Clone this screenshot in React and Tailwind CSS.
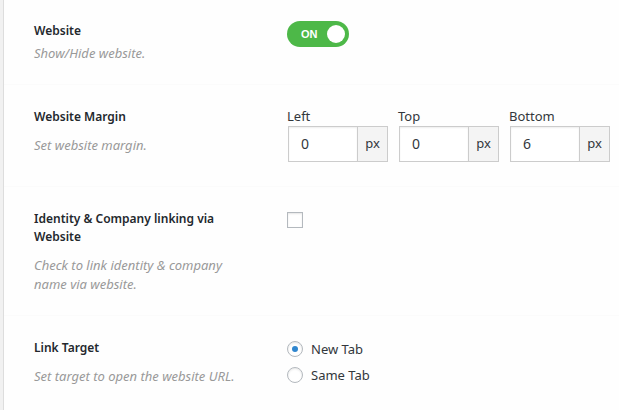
import { useState } from "react";

function Row({ title, htmlFor, hint, hintGap = "mt-2.5", className, children }) {
  const Title = htmlFor ? "label" : "h3";
  return (
    <section className={`flex border-b border-[#fbfbfb] px-[30px] last:border-b-0 ${className}`}>
      <div className="w-[253px] shrink-0 pt-px pr-10">
        <Title htmlFor={htmlFor} className="block text-xs leading-[18px] font-semibold text-[#23282d]">
          {title}
        </Title>
        <p className={`text-[13px] leading-[19px] text-[#999] italic ${hintGap}`}>{hint}</p>
      </div>
      <div className="min-w-0 grow">{children}</div>
    </section>
  );
}

function PixelField({ id, label, initial }) {
  const [value, setValue] = useState(initial);
  return (
    <div className="w-[101px] shrink-0">
      <label htmlFor={id} className="block leading-[18px]">
        {label}
      </label>
      <div className="mt-px ml-px flex h-9 border border-[#ccc]">
        <input
          id={id}
          type="text"
          value={value}
          onChange={(e) => setValue(e.target.value)}
          className="w-[69px] border-r border-[#ccc] bg-white px-3 text-sm text-[#32373c] shadow-[inset_0_1px_2px_rgba(0,0,0,0.07)] outline-none"
        />
        <span className="flex grow items-center justify-center bg-[#f4f4f4]">px</span>
      </div>
    </div>
  );
}

function RadioOption({ label, value, selected, onSelect }) {
  return (
    <label className="flex items-center gap-2">
      <input
        type="radio"
        name="link-target"
        value={value}
        checked={selected === value}
        onChange={() => onSelect(value)}
        className="grid size-4 appearance-none place-items-center rounded-full border border-[#b4b9be] bg-white shadow-[inset_0_1px_2px_rgba(0,0,0,0.1)] before:size-1.5 before:rounded-full checked:before:bg-[#2f86cf]"
      />
      {label}
    </label>
  );
}

export default function App() {
  const [visible, setVisible] = useState(true);
  const [linked, setLinked] = useState(false);
  const [target, setTarget] = useState("new");

  return (
    <div className="min-h-screen bg-[#f1f1f1] pl-[3px] font-['Noto_Sans',sans-serif] text-[13px] text-[#32373c]">
      <main className="min-h-screen border-l border-[#ddd] bg-[#fefefe]">
        <Row title="Website" hint="Show/Hide website." hintGap="mt-1" className="pt-[21px] pb-[21px]">
          <button
            type="button"
            role="switch"
            aria-checked={visible}
            aria-label="Website"
            onClick={() => setVisible(!visible)}
            className="flex h-[26px] w-[62px] items-center justify-between rounded-full bg-[#4db848] pr-1 pl-3.5 font-['Liberation_Sans',sans-serif] text-[11px] font-bold text-white"
          >
            {visible ? "ON" : "OFF"}
            <span className="size-[18px] rounded-full bg-white" />
          </button>
        </Row>
        <Row title="Website Margin" hint="Set website margin." className="pt-[22px] pb-6">
          <div className="flex gap-2.5">
            <PixelField id="margin-left" label="Left" initial="0" />
            <PixelField id="margin-top" label="Top" initial="0" />
            <PixelField id="margin-bottom" label="Bottom" initial="6" />
          </div>
        </Row>
        <Row
          title="Identity & Company linking via Website"
          htmlFor="identity-link"
          hint="Check to link identity & company name via website."
          className="pt-[22px] pb-[21px]"
        >
          <input
            id="identity-link"
            type="checkbox"
            checked={linked}
            onChange={(e) => setLinked(e.target.checked)}
            className="mt-[3px] block size-4 appearance-none border border-[#b4b9be] bg-white shadow-[inset_0_1px_2px_rgba(0,0,0,0.1)] checked:bg-[#1e8cbe]"
          />
        </Row>
        <Row title="Link Target" hint="Set target to open the website URL." className="pt-[22px] pb-4">
          <div role="radiogroup" aria-label="Link Target" className="flex flex-col gap-1.5 pt-px leading-5">
            <RadioOption label="New Tab" value="new" selected={target} onSelect={setTarget} />
            <RadioOption label="Same Tab" value="same" selected={target} onSelect={setTarget} />
          </div>
        </Row>
      </main>
    </div>
  );
}
